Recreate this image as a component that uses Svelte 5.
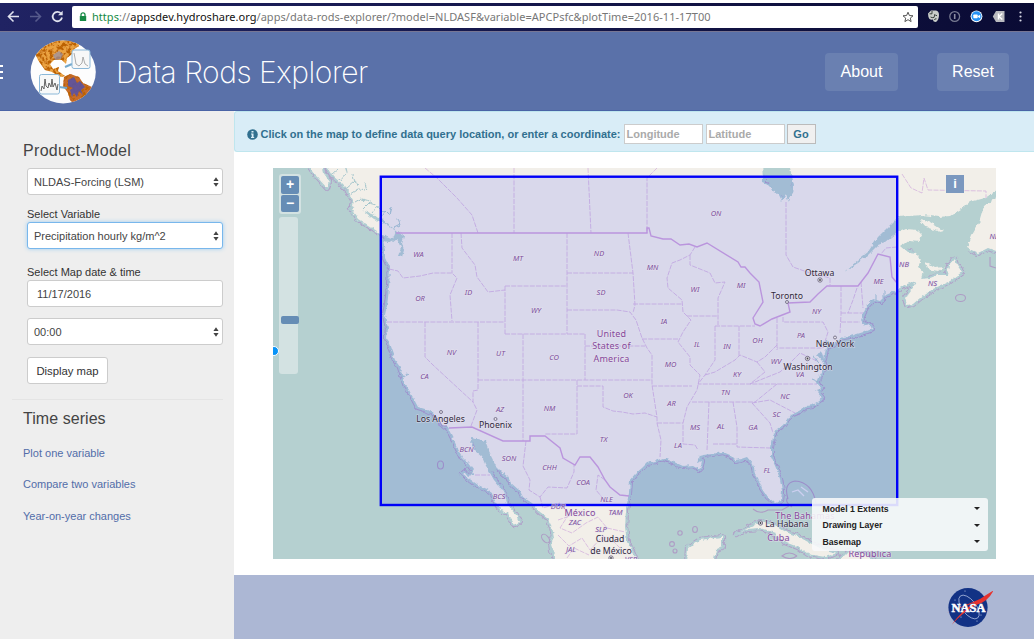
<script>
  const land = 'M328 160L328 168L333 176L341 183L347 189L350 195L353 200L352 205L361 210L370 213L382 218L386 223L393 228L398 232L404 236L402 243L404 250L402 257L398 256L401 248L397 239L392 243L383 241L385 250L385 258L390 268L389 288L387 305L385 315L388 328L387 338L392 352L395 360L400 367L403 377L405 384L409 390L418 407L425 409L433 413L440 422L448 428L453 438L457 447L462 457L468 463L473 470L474 475L468 476L465 472L463 474L478 485L487 489L493 493L495 501L500 509L507 513L511 519L515 525L519 522L516 515L508 506L505 496L500 487L494 480L490 473L485 464L482 457L475 451L471 446L472 437L478 439L485 441L489 452L493 460L497 467L503 473L508 477L511 483L520 491L523 497L532 503L540 512L547 517L552 527L554 537L551 543L552 550L559 565L638 565L632 551L627 542L625 527L626 510L629 493L630 480L635 474L642 468L647 463L655 461L663 458L674 462L683 466L693 465L700 469L702 461L697 463L699 456L703 455L712 454L723 452L730 455L735 460L741 459L747 457L753 464L755 473L758 478L762 488L768 497L775 503L781 501L782 491L780 479L776 468L771 457L771 447L773 436L777 429L783 425L790 415L800 411L806 406L813 405L818 401L822 398L817 392L821 388L817 383L820 375L825 367L822 361L817 355L821 350L824 359L826 348L824 342L827 340L830 346L837 342L842 337L850 336L857 334L867 331L872 329L870 325L865 326L861 319L864 312L867 306L873 299L880 301L886 295L897 290L908 284L917 281L911 290L905 298L907 305L913 304L920 298L933 289L950 281L962 272L957 265L955 259L949 266L947 275L938 275L930 278L921 279L923 271L918 267L921 260L916 253L908 252L901 246L909 240L920 241L922 234L918 230L906 229L897 233L886 242L878 245L868 255L858 263L845 271L858 260L868 252L877 238L885 230L898 217L922 215L938 217L950 216L961 209L970 202L985 198L1002 187L1002 160L790 160L790 168L794 185L789 202L786 194L782 201L778 193L773 190L768 185L763 183L762 160Z';
  const islands = [
    'M305 160L318 178L327 188L329 181L323 172L320 160Z',
    'M351 209L357 206L366 213L374 219L384 223L396 231L393 239L386 237L377 231L369 226L358 219Z',
    'M687 565L688 548L700 540L722 537L722 547L716 550L713 565Z',
    'M736 535L748 528L760 522L773 525L785 532L797 536L810 543L822 549L837 553L825 557L808 554L798 547L785 542L775 533L760 528L747 529Z',
    'M840 560L849 551L866 554L873 560Z',
    'M967 248L972 235L979 223L984 206L1002 193L1002 253L988 248L978 253Z'
  ];
  const borders = 'M396 233H647V228H649L651 236L663 239L671 239L680 245L689 244L697 247L707 243L738 262L741 267L745 267L750 273L759 282L763 302L753 318L755 324L760 326L772 319L790 312L788 303L810 302L818 294L827 286H858L868 273L878 254L890 257L892 277L897 283M449 428L472 427L503 441H530V436H545L560 448L563 458L575 465L580 457H590L598 467L605 480L610 487L620 495L629 496';
  const states = 'M425 168L437 178L457 198L472 215L478 233M514 168V233M588 168L591 233M657 168L647 178V233M452 233V273M389 269L398 271L403 278L420 276L433 273H452L457 278L450 295L452 321M387 322H505M461 233L462 248L475 265L477 277L488 292L505 290M505 286H567M505 286V334M567 233V334M505 334H585M523 334V441M478 322V390L473 391L473 402L477 410L471 426M425 322V357L433 365L473 402M478 380H652M585 334V380M585 346H645M577 380V434H545M577 386H603V407L613 411L622 412L633 414L645 413L657 417M628 233L633 273L635 305L633 313M567 273H633M567 310H617L630 312L636 320L642 338L647 348L652 355V385L657 417V423L661 440L660 457M633 304H682M642 339H678M695 247L690 255L680 260L672 263L667 278L668 288L682 300L683 312L691 320L683 332L678 342L690 357L690 365L700 375L697 390L687 407L683 423V444L695 445L698 450M687 316H718M690 255V265L710 273L715 283L725 282L718 298V325M715 326H755M715 326V360L705 375L698 384H817M739 326V357M786 202V255L793 267L810 273L830 278V285M777 318V350M783 317V322H823L828 332L823 348H777M841 286V315L840 333M857 288L853 300L848 313M861 282L863 308M841 313H863M841 322H860M692 402H755M652 386H692M657 423H683M709 402L707 450M733 402L737 427V447L770 448M713 444H737M752 403L770 423L773 433M752 403L770 400L795 413M777 384L755 402M705 375L715 372L735 360L740 355L757 362L765 357L777 345M757 362L765 372L750 384L780 372L790 363L800 353L817 361M526 441L523 466L530 480L529 490L540 497L548 487L567 488L574 472V465M605 480L598 475L596 490L606 502M540 497L543 508L560 503L569 514L560 528L572 533L586 523L598 517L607 528L625 532M558 535L569 546L582 538L590 550L603 536L614 542L623 551M475 475H490M897 247L886 248L881 254M902 174L911 188L922 193L924 178L928 190L986 191V198M558 520L570 516M567 558L574 548L589 555';
  const labels = [
    ['WA',418.500,257],['MT',518,261],['ND',599,256],['MN',652.500,270],['ON',716,216],['OR',420,301],['ID',468.500,295],['SD',601,295],['WI',695,292],['MI',741,288],
    ['WY',536,312.500],['IA',664,324],['NV',451.500,355],['UT',500.500,356],['CO',554,360],['IL',697,347],['IN',727,349],['OH',757.500,343],['PA',801,338],['NY',816.500,314],['ME',878.500,284],
    ['NB',904,267],['NS',932.500,286],['NL',994,239],['CA',424.500,379],['AZ',500,412],['NM',549.500,411],['OK',628,398],['MO',670.500,367],['AR',671.500,405.500],['KY',737,376.500],['WV',776,364],
    ['VA',800,377],['TN',725.500,395],['NC',785,399],['SC',776.500,416.500],['MS',695,429.500],['AL',721,428.500],['GA',753,430],['FL',767,473],['TX',603.500,442],['LA',678,448],
    ['BCN',466.500,451.500],['SON',509,460.500],['CHH',549.500,470],['COA',583,485],['BCS',499,499],['NLE',606.500,502],['DUR',558,509],['TAM',615.500,514.500],['ZAC',575,525],['SLP',601,531.500],['JAL',571,551.500],['VER',631,562]
  ];
  const cities = [['Ottawa',819.500,275.500],['Toronto',787,299],['New York',835,347],['Washington',808,370],['Los Angeles',440.500,422],['Phoenix',495.500,428],['La Habana',787,526.500],['Ciudad',610,542],['de México',611,554]];
  const nations = [['United',611.500,336.500],['States of',611.500,349],['America',611.500,361.500],['México',580,516],['The Bahamas',805,519],['Cuba',778.500,541],['República',870,557]];
  const towns = [[820,280,1],[787,302,0],[835,337.500,0],[807.500,358.500,1],[441,412,0],[495.500,419,0],[760.500,523,1],[611,558,1]];
  const links = ['Plot one variable', 'Compare two variables', 'Year-on-year changes'];
  const layers = ['Model 1 Extents', 'Drawing Layer', 'Basemap'];
</script>

{#snippet arrows()}
  <svg class="arrows" viewBox="0 0 6 10"><path d="M3 .3L5.600 4H.4zM3 9.700L5.600 6H.4z" fill="#444" /></svg>
{/snippet}

<div class="window">
  <div class="chrome">
    <svg class="nav" width="72" height="28" viewBox="0 3 72 28" fill="none" stroke="#dfe1ee" stroke-width="1.600">
      <path d="M19 16.500H8.500M13.500 11.500L8.500 16.500L13.500 21.500" />
      <path d="M30 16.500H40.500M35.500 11.500L40.500 16.500L35.500 21.500" stroke="#565a8c" />
      <path d="M61 13.500A4.700 4.700 0 1 0 62 17.500" stroke-width="1.800" />
      <path d="M62.700 10.800V15.300H58z" fill="#dfe1ee" stroke="none" />
    </svg>
    <div class="address">
      <svg width="8" height="10" viewBox="0 0 8 10"><path d="M2 4V2.800a2 2 0 0 1 4 0V4" fill="none" stroke="#168a45" stroke-width="1.300" /><rect x=".8" y="4" width="6.400" height="5" rx=".6" fill="#168a45" /></svg>
      <span class="url"><i>https</i>://<b>appsdev.hydroshare.org</b>/apps/data-rods-explorer/?model=NLDASF&amp;variable=APCPsfc&amp;plotTime=2016-11-17T00</span>
      <svg class="star" width="12" height="12" viewBox="0 0 12 12"><path d="M6 1.200L7.400 4.500L11 4.800L8.300 7.100L9.100 10.600L6 8.700L2.900 10.600L3.700 7.100L1 4.800L4.600 4.500z" fill="none" stroke="#555" /></svg>
    </div>
    <svg class="ext" width="116" height="28" viewBox="918 3 116 28">
      <path d="M928 13.500L931 10.500H936Q939 11 939 15Q939 20 936 22Q933 22 933 19.500Q931 20 929.500 19Q928 17 928 13.500z" fill="#c9cdc9" />
      <path d="M929.500 13.800H932V11M935.500 15.500H937M934.500 20Q934.500 18.500 936.500 18.800M930.500 17Q932 18 934 17.500L935 14" stroke="#39413d" fill="none" />
      <circle cx="954.700" cy="16.500" r="4.900" fill="none" stroke="#777a91" stroke-width="1.300" /><path d="M954.700 14V19" stroke="#8c8ea3" stroke-width="1.600" />
      <circle cx="976.500" cy="16.300" r="5.900" fill="#fff" /><circle cx="976.500" cy="16.300" r="5" fill="#2691f4" /><rect x="973.300" y="14.500" width="4.400" height="3.800" rx=".8" fill="#fff" /><path d="M978 16L980.200 14.700V18.200L978 17z" fill="#fff" />
      <path d="M992.800 16.500L996 11H1004.500V22H996z" fill="#b9babf" /><path d="M998.500 13.500V19.500M1002.300 13.500L999 16.500L1002.300 19.500" stroke="#fff" stroke-width="1.400" fill="none" />
      <g fill="#d8d9e6"><circle cx="1020.500" cy="12.500" r="1.100" /><circle cx="1020.500" cy="16.500" r="1.100" /><circle cx="1020.500" cy="20.500" r="1.100" /></g>
    </svg>
  </div>

  <header>
    <div class="burger"><span></span><span></span><span></span></div>
    <svg class="logo" width="66" height="64" viewBox="30 40 66 64">
      <defs>
        <clipPath id="disc"><ellipse cx="63.200" cy="72" rx="32.600" ry="31.500" /></clipPath>
        <filter id="grain" x="0" y="0" width="1" height="1"><feTurbulence type="fractalNoise" baseFrequency=".28" numOctaves="3" seed="4" /><feColorMatrix values="0 0 0 0 .5  0 0 0 0 .12  0 0 0 0 0  5 0 0 0 -2.100" /><feComposite in2="SourceGraphic" operator="in" /><feBlend in2="SourceGraphic" /></filter>
      </defs>
      <ellipse cx="63.200" cy="72" rx="32.600" ry="31.500" fill="#fdfdfd" />
      <g clip-path="url(#disc)">
        <g filter="url(#grain)">
          <path d="M32 58L36 50L48 38H78L79 46L73 50L72 54L67 58L66 64L62 60L54 60L50 64L53 69L59 67L58 71L65 76L61 77L52 72L45 70L38 60L35 53z" fill="#eba23f" />
          <path d="M64 77L70 74L79 77L83 83L92 87L91 95L85 101L78 108L70 100L68 93L63 86z" fill="#c66c2c" />
        </g>
        <path d="M53 55L59 51L63 54L61 59L55 60z" fill="#8f91b4" opacity=".65" />
        <path d="M68 80L74 77L77 83L80 81L85 87L81 90L83 95L79 91L77 97L74 93L72 97L70 90L73 88L68 86z" fill="#5451a9" opacity=".85" />
      </g>
      <path d="M65 67L72 64" stroke="#72a8cc" stroke-width="2" /><path d="M59 87L67 88" stroke="#72a8cc" stroke-width="2" />
      <rect x="72" y="50" width="18" height="18.500" rx="2" fill="#f7f8f8" stroke="#8bb8d8" />
      <rect x="39.500" y="74.500" width="20" height="19.500" rx="2" fill="#f7f8f8" stroke="#8bb8d8" />
      <path d="M74 53L75 58L76 64L79 66L82 63L83 57L85 64L88 66" fill="none" stroke="#999" stroke-width=".8" />
      <path d="M41 91L42 86L44 89L45 79L46 86L48 88L49 83L51 87L52 79L53 87L55 83L57 90L58 84" fill="none" stroke="#555" stroke-width=".9" />
    </svg>
    <h1>Data Rods Explorer</h1>
    <div class="actions"><button>About</button><button>Reset</button></div>
  </header>

  <div class="body">
    <aside>
      <h2 class="model">Product-Model</h2>
      <div class="field">NLDAS-Forcing (LSM){@render arrows()}</div>
      <p class="lab first">Select Variable</p>
      <div class="field focus">Precipitation hourly kg/m^2{@render arrows()}</div>
      <p class="lab second">Select Map date &amp; time</p>
      <div class="field date">11/17/2016</div>
      <div class="field time">00:00{@render arrows()}</div>
      <button class="display">Display map</button>
      <hr />
      <h2 class="series">Time series</h2>
      {#each links as link}<a href="#top">{link}</a>{/each}
    </aside>

    <main>
      <div class="alert">
        <svg width="11" height="11" viewBox="0 0 11 11"><circle cx="5.500" cy="5.500" r="5.300" fill="#31708f" /><path d="M4.500 2H6.500V3.500H4.500zM4 4.500H6.500V8H7.200V9H4V8H4.700V5.500H4z" fill="#d9edf7" /></svg>
        <strong>Click on the map to define data query location, or enter a coordinate:</strong>
        <div class="coord lon">Longitude</div><div class="coord">Latitude</div><button class="go">Go</button>
      </div>

      <div class="map">
        <svg class="canvas" width="723" height="391" viewBox="273 168 723 391">
          <defs>
            <filter id="rough" filterUnits="userSpaceOnUse" x="265" y="160" width="740" height="408"><feTurbulence type="fractalNoise" baseFrequency=".2" numOctaves="3" seed="7" /><feDisplacementMap in="SourceGraphic" scale="4.500" xChannelSelector="R" yChannelSelector="G" /></filter>
          </defs>
          <rect x="273" y="167" width="723" height="393" fill="#b5d0d0" />
          <g filter="url(#rough)">
            <g fill="none" stroke-linejoin="round">
              <path d={land} stroke="#b09fc8" stroke-width="6.200" />
              {#each islands as d}<path {d} stroke="#b09fc8" stroke-width="6.200" />{/each}
              <path d={land} stroke="#b0cdd2" stroke-width="4.400" />
              {#each islands as d}<path {d} stroke="#b0cdd2" stroke-width="4.400" />{/each}
            </g>
            <path d="M845 271L870 235L899 214L950 214L996 185V200L970 252L950 258L941 272L920 278L914 250L898 246L898 235L870 255zM471 438L486 442L498 470L491 472L480 458z M761 168H791L792 200L773 190z M384 220L404 235L403 257L385 250z" fill="#b5d0d0" />
            <path d={land} fill="#f2efe9" />
            {#each islands as d}<path {d} fill="#f2efe9" />{/each}
            <path d="M920 220L930 222L944 231L940 232L926 227zM925 262L934 267L945 266L938 271L928 269z" fill="#f2efe9" />
            <g fill="none" stroke="#a5c6cc" stroke-width="1">
              <path d="M333 174L338 170M340 181L347 173L346 169M347 188L354 182L359 185M351 194L359 189L366 190M355 203L362 199L370 201M363 209L369 203L376 205M372 213L377 207L384 211M381 217L385 211L389 215L391 207M394 228L400 225L398 219M340 179L336 182M355 183L353 174M367 190L365 183" />
              <path d="M822 389L815 391M819 382L812 379M818 363L813 355M866 307L872 300M876 300V294M884 297V290M402 377L408 374" />
            </g>
          </g>
          <g fill="none" stroke="#ae9cc5" stroke-width="1.100">
            <ellipse cx="440.500" cy="465" rx="3" ry="4" /><ellipse cx="960.500" cy="298" rx="5" ry="3.500" /><ellipse cx="545.500" cy="538.500" rx="3" ry="5" transform="rotate(-40 545.500 538.500)" />
            <circle cx="680" cy="533" r="2.200" /><circle cx="672" cy="544" r="2.400" /><circle cx="675" cy="551" r="2" /><ellipse cx="695" cy="529.500" rx="2.400" ry="3" />
            <path d="M788 499Q783 483 795 481Q812 482 816 503M792 507Q784 502 788 497M797 556Q789 550 782 556Q790 561 797 556M753 509Q760 515 768 510L782 510L789 506M433 415L439 420L442 426L447 426M990 257V266L996 268" />
          </g>
          <path d="M792 492L798 490L804 496M801 487L808 492" fill="none" stroke="#e5e5ef" stroke-width="1.300" />
          <path d={states} fill="none" stroke="#d8badf" stroke-width=".9" stroke-dasharray="5 1.200" />
          <path d={borders} fill="none" stroke="#d0a4da" stroke-width="1.400" />
          <rect x="380.800" y="176.700" width="516.400" height="328.300" fill="#0014ff" fill-opacity=".1" stroke="#0000f8" stroke-width="2.400" />
          <g class="states">{#each labels as [t, x, y]}<text {x} {y}>{t}</text>{/each}</g>
          <g class="nations">{#each nations as [t, x, y]}<text {x} {y}>{t}</text>{/each}</g>
          <g class="cities">{#each cities as [t, x, y]}<text {x} {y}>{t}</text>{/each}</g>
          {#each towns as [x, y, capital]}
            <circle cx={x} cy={y} r={capital ? 2.2 : 1.5} fill="#e4e1ea" stroke="#666078" stroke-width=".8" />
            {#if capital}<circle cx={x} cy={y} r=".9" fill="#444" />{/if}
          {/each}
        </svg>
        <div class="zoom"><span>+</span><span>−</span></div>
        <div class="slider"><span></span></div>
        <div class="handle"></div>
        <div class="info">i</div>
        <div class="legend">{#each layers as layer}<div><span>{layer}</span><svg width="6" height="3" viewBox="0 0 6 3"><path d="M0 0H6L3 3z" fill="#222" /></svg></div>{/each}</div>
      </div>

      <footer>
        <svg width="48" height="46" viewBox="945 585 48 46">
          <circle cx="968" cy="607.500" r="19.600" fill="#123285" />
          <g fill="#dce2f4"><circle cx="955" cy="600" r=".5" /><circle cx="981" cy="615" r=".5" /><circle cx="961" cy="617" r=".5" /><circle cx="965" cy="591" r=".5" /><circle cx="977" cy="621" r=".5" /></g>
          <ellipse cx="969" cy="607" rx="7" ry="14" transform="rotate(-38 969 607)" fill="none" stroke="#a4b4da" stroke-width=".8" />
          <path d="M946.500 613Q966 605 980 599Q986 595 993.500 590.500Q988 602 976 605Q962 613 951.500 625Q961 611 975 602.500Q960 608 946.500 613z" fill="#e6332f" />
          <text x="968.500" y="611.500" textLength="34" lengthAdjust="spacingAndGlyphs">NASA</text>
        </svg>
      </footer>
    </main>
  </div>
</div>

<style>
  :global(body) { margin: 0; overflow: hidden; }
  .window { width: 1034px; height: 639px; overflow: hidden; display: flex; flex-direction: column; background: #fff; font-family: "Liberation Sans", Arial, sans-serif; font-size: 11px; color: #444; box-sizing: border-box; padding-top: 3px; }
  .window :global(svg) { display: block; flex: none; }
  button { font-family: inherit; padding: 0; }
  .chrome { height: 29px; flex: none; display: flex; align-items: flex-start; background: linear-gradient(90deg, #202363, #0a0b34); border-bottom: 1px solid #777694; box-sizing: border-box; }
  .address { width: 847px; height: 22px; margin-top: 3px; box-sizing: border-box; padding: 0 4px 0 7px; display: flex; align-items: center; background: #fff; border-radius: 2px; }
  .url { margin-left: 5px; font: 11px/22px "Noto Sans", sans-serif; letter-spacing: .035px; color: #777; white-space: nowrap; }
  .url i { font-style: normal; color: #168a45; }
  .url b { font-weight: 400; color: #111; }
  .star { margin-left: auto; }
  header { height: 79px; flex: none; display: flex; align-items: center; box-sizing: border-box; padding-top: 2px; background: #5a71a9; border-bottom: 1px solid #4a64a6; }
  .burger { width: 3px; margin-right: 27px; display: flex; flex-direction: column; gap: 4px; }
  .burger span { height: 2px; background: #fff; }
  h1 { margin: 0 0 0 20px; font: 200 30px/40px Inter, sans-serif; letter-spacing: -.47px; color: #fff; white-space: nowrap; }
  .actions { margin: 0 25px 0 auto; display: flex; gap: 39px; }
  .actions button { width: 73px; height: 38px; border: 0; border-radius: 4px; background: #6a80b1; color: #fff; font-size: 16px; }
  .actions button + button { width: 72px; }
  .body { flex: 1; display: flex; min-height: 0; }
  aside { width: 234px; flex: none; box-sizing: border-box; padding: 30px 12px 0 23px; background: #eee; }
  h2 { margin: 0 0 7px; font-weight: 400; font-size: 16px; line-height: 20px; color: #444; }
  .model { letter-spacing: .32px; }
  .field { width: 196px; height: 27px; margin-left: 4px; box-sizing: border-box; border: 1px solid #ccc; border-radius: 3px; padding: 0 3px 0 6px; background: #fff; display: flex; align-items: center; justify-content: space-between; color: #444; white-space: nowrap; }
  .field :global(.arrows) { width: 6px; height: 10px; }
  .focus { border-color: #78b7ec; box-shadow: 0 0 4px #9fcdf0; }
  .date { padding-left: 9px; margin-bottom: 11px; }
  .lab { margin: 0 0 0 4px; height: 14px; line-height: 14px; color: #333; }
  .first { margin: 12px 0 1px 4px; }
  .second { margin: 16px 0 1px 4px; }
  .display { display: block; width: 81px; height: 27px; margin: 12px 0 0 4px; border: 1px solid #ccc; border-radius: 3px; background: #fff; font-size: 11.300px; color: #333; }
  hr { margin: 15px 0 9px -11px; width: 211px; border: 0; border-top: 1px solid #e4e4e4; }
  .series { margin-bottom: 17px; letter-spacing: .05px; }
  a { display: block; height: 14px; line-height: 14px; margin-bottom: 17.300px; color: #526da9; text-decoration: none; }
  main { flex: 1; display: flex; flex-direction: column; min-width: 0; }
  .alert { height: 41px; flex: none; box-sizing: border-box; border: 1px solid #bfe6ee; border-width: 1px 0 1px 1px; border-radius: 3px 0 0 3px; padding: 5px 0 0 12px; background: #d9edf7; color: #31708f; display: flex; align-items: center; white-space: nowrap; }
  .alert strong { margin-left: 2.500px; width: 363px; font-size: 11px; }
  .coord { width: 79px; height: 20px; box-sizing: border-box; border: 1px solid #ccc; background: #fff; color: #aaa; font-weight: 700; line-height: 18px; padding-left: 2px; margin-right: 2px; }
  .lon { margin-right: 3px; }
  .go { width: 29px; height: 20px; border: 1px solid #bbb; background: #f0f0f0; color: #31708f; font-weight: 700; font-size: 11px; }
  .map { width: 723px; height: 391px; flex: none; margin: 16px 0 0 39px; position: relative; overflow: hidden; }
  .canvas text { font-family: "Noto Sans", sans-serif; text-anchor: middle; paint-order: stroke; stroke: #e9e5f0; stroke-width: 1.200px; stroke-opacity: .65; }
  .states text { font-size: 7.500px; font-style: italic; fill: #7c4f9c; }
  .nations text { font-size: 9px; fill: #85489a; letter-spacing: .2px; }
  .cities text { font-size: 8.700px; fill: #30293b; }
  .zoom { position: absolute; left: 6px; top: 6px; width: 18px; padding: 2px; border-radius: 3px; background: #d3e2e2; display: flex; flex-direction: column; gap: 1px; }
  .zoom span { height: 17.500px; border-radius: 2px; background: #668db5; color: #fff; font: 700 14px/17px "Liberation Sans", sans-serif; text-align: center; }
  .slider { position: absolute; left: 6px; top: 49px; width: 19px; height: 157px; border-radius: 3px; background: #d3e2e2; }
  .slider span { position: absolute; left: 2px; top: 99px; width: 17.500px; height: 8px; border-radius: 2px; background: #668db5; }
  .handle { position: absolute; left: -4px; top: 178px; width: 8px; height: 8px; border: 1px solid #fff; border-radius: 50%; background: #0893f7; }
  .info { position: absolute; left: 673px; top: 7px; width: 18px; height: 18px; background: #7b98bf; color: #fff; font: 700 13px/18px "Liberation Sans", sans-serif; text-align: center; }
  .legend { position: absolute; left: 538.500px; top: 330px; width: 176px; height: 53px; box-sizing: border-box; padding: 2.500px 8px 0 11px; border-radius: 3px; background: rgba(248, 249, 250, .88); color: #222; font-size: 8.700px; font-weight: 700; }
  .legend div { height: 16.500px; display: flex; align-items: center; justify-content: space-between; }
  footer { height: 64px; flex: none; margin-top: auto; box-sizing: border-box; padding: 10px 41px 0 0; display: flex; justify-content: flex-end; background: #acb7d4; }
  footer text { font: 700 13px "Liberation Serif", serif; fill: #fff; stroke: #fff; stroke-width: .5px; text-anchor: middle; }
</style>
